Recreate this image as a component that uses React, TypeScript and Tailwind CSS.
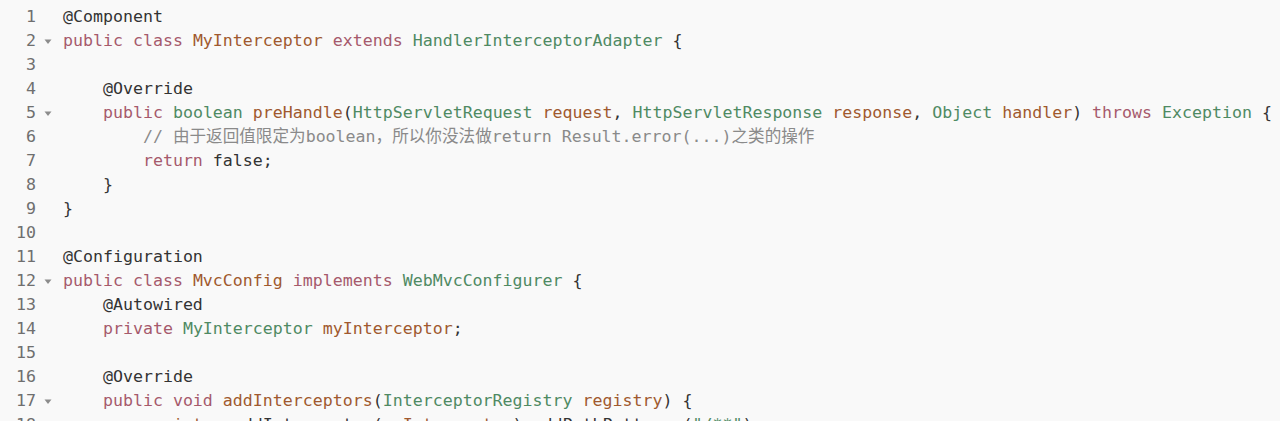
import React from "react";

type Tok = [string, string?];

const K = "text-[#a65a6c]"; // keywords
const T = "text-[#4f8a63]"; // types
const N = "text-[#a0592f]"; // names
const A = "text-[#333333]"; // annotations / plain
const C = "text-[#8a8a8a]"; // comments

const lines: { fold?: boolean; toks: Tok[] }[] = [
  { toks: [["@Component", A]] },
  {
    fold: true,
    toks: [
      ["public class ", K],
      ["MyInterceptor ", N],
      ["extends ", K],
      ["HandlerInterceptorAdapter ", T],
      ["{", A],
    ],
  },
  { toks: [] },
  { toks: [["    @Override", A]] },
  {
    fold: true,
    toks: [
      ["    public ", K],
      ["boolean ", T],
      ["preHandle", N],
      ["(", A],
      ["HttpServletRequest ", T],
      ["request", N],
      [", ", A],
      ["HttpServletResponse ", T],
      ["response", N],
      [", ", A],
      ["Object ", T],
      ["handler", N],
      [") ", A],
      ["throws ", K],
      ["Exception ", T],
      ["{", A],
    ],
  },
  {
    toks: [
      ["        // 由于返回值限定为boolean，所以你没法做return Result.error(...)之类的操作", C],
    ],
  },
  { toks: [["        return ", K], ["false;", A]] },
  { toks: [["    }", A]] },
  { toks: [["}", A]] },
  { toks: [] },
  { toks: [["@Configuration", A]] },
  {
    fold: true,
    toks: [
      ["public class ", K],
      ["MvcConfig ", N],
      ["implements ", K],
      ["WebMvcConfigurer ", T],
      ["{", A],
    ],
  },
  { toks: [["    @Autowired", A]] },
  {
    toks: [
      ["    private ", K],
      ["MyInterceptor ", T],
      ["myInterceptor", N],
      [";", A],
    ],
  },
  { toks: [] },
  { toks: [["    @Override", A]] },
  {
    fold: true,
    toks: [
      ["    public void ", K],
      ["addInterceptors", N],
      ["(", A],
      ["InterceptorRegistry ", T],
      ["registry", N],
      [") {", A],
    ],
  },
  {
    toks: [
      ["        registry", N],
      [".addInterceptor(", A],
      ["myInterceptor", N],
      [").addPathPatterns(", A],
      ['"/**"', T],
      [");", A],
    ],
  },
];

const FoldArrow = () => (
  <svg width="8" height="6" viewBox="0 0 8 6" className="mt-[1px]">
    <path d="M0.5 0.5 L7.5 0.5 L4 5 Z" fill="#8c8c8c" />
  </svg>
);

export default function App() {
  return (
    <div
      className="w-[1280px] h-[421px] overflow-hidden bg-[#f9f9f9] pt-[5px] text-[16.6px] leading-[24px]"
      style={{ fontFamily: '"DejaVu Sans Mono", "Noto Sans CJK SC", monospace' }}
    >
      {lines.map((line, i) => (
        <div key={i} className="flex h-[24px] items-center">
          <div className="w-[36px] text-right text-[#6f6f6f] shrink-0">{i + 1}</div>
          <div className="w-[27px] flex items-center justify-start pl-[8px] shrink-0">
            {line.fold && <FoldArrow />}
          </div>
          <div className="whitespace-pre">
            {line.toks.map(([text, cls], j) => (
              <span key={j} className={cls}>
                {text}
              </span>
            ))}
          </div>
        </div>
      ))}
    </div>
  );
}
